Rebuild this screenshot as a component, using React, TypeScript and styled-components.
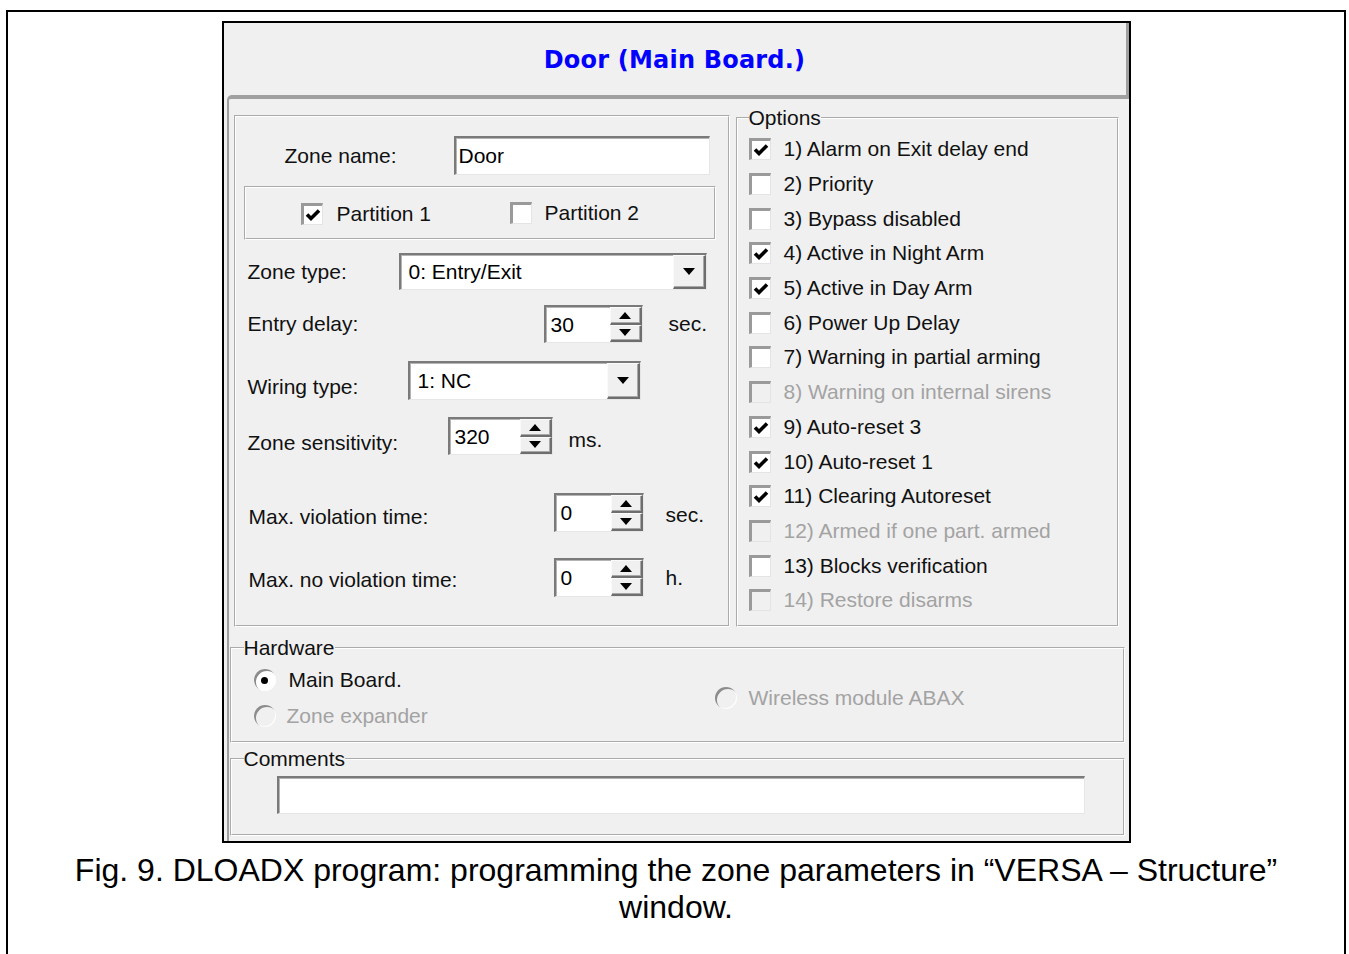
import React from 'react';
import styled, { createGlobalStyle } from 'styled-components';

const GlobalStyle = createGlobalStyle`
  html, body {
    margin: 0;
    padding: 0;
    background: #fff;
  }
  body {
    font-family: "Liberation Sans", Arial, sans-serif;
    color: #111;
    overflow: hidden;
  }
`;

// Figure frame
const Figure = styled.div`
  margin: 10px 3px 0 6px;
  height: 960px;
  box-sizing: border-box;
  border: 2px solid #000;
  border-bottom: none;
  padding-top: 9px;
  display: flex;
  flex-direction: column;
  align-items: center;
`;

const Caption = styled.p`
  margin: 9px 0 0;
  max-width: 1240px;
  font-size: 32px;
  line-height: 37px;
  color: #000;
  text-align: center;
`;

// Dialog window
const Dialog = styled.div`
  width: 909px;
  height: 822px;
  box-sizing: border-box;
  border: 2px solid #000;
  background: #f0f0f0;
  display: flex;
  flex-direction: column;
  font-size: 21px;
`;

const Header = styled.div`
  height: 72px;
  flex: none;
  border-right: 3px solid #a0a0a0;
  display: flex;
  align-items: center;
  justify-content: center;
  padding-top: 2px;
  box-sizing: border-box;
`;

const Title = styled.h1`
  margin: 0;
  font-family: "DejaVu Sans", Verdana, sans-serif;
  font-size: 24px;
  font-weight: bold;
  letter-spacing: 0.2px;
  color: #0000ff;
`;

const Body = styled.div`
  flex: 1;
  margin-left: 3px;
  border-top: 4px solid #a0a0a0;
  border-left: 2px solid #a0a0a0;
  border-top-left-radius: 5px;
  display: flex;
  flex-direction: column;
`;

const TopRow = styled.div`
  display: flex;
  gap: 6px;
  height: 520px;
  margin: 8px 10px 0 5px;
`;

const Panel = styled.div`
  width: 496px;
  margin-top: 8px;
  box-sizing: border-box;
  border: 2px groove #fff;
  display: flex;
  flex-direction: column;
`;

const Group = styled.fieldset<{ $w?: number; $h: number; $m: string }>`
  ${p => (p.$w ? `width: ${p.$w}px;` : '')}
  height: ${p => p.$h}px;
  margin: ${p => p.$m};
  padding: 0;
  box-sizing: border-box;
  border: 2px groove #fff;
  min-width: 0;
`;

const Legend = styled.legend<{ $x: number }>`
  margin-left: ${p => p.$x}px;
  padding: 0;
  font-size: 21px;
  line-height: 22px;
  color: #111;
`;

// Form rows
const FormRow = styled.div<{ $top: number; $h: number; $indent?: number }>`
  display: flex;
  align-items: center;
  flex: none;
  margin-top: ${p => p.$top}px;
  height: ${p => p.$h}px;
  padding-left: ${p => p.$indent ?? 12}px;
`;

const Label = styled.span<{ $w: number; $dy?: number }>`
  width: ${p => p.$w}px;
  flex: none;
  padding-top: ${p => (p.$dy ?? 0) * 2}px;
  white-space: nowrap;
`;

const Unit = styled.span<{ $gap: number; $dy?: number }>`
  margin-left: ${p => p.$gap}px;
  padding-top: ${p => (p.$dy ?? 0) * 2}px;
`;

const Sunken = styled.div<{ $w: number }>`
  width: ${p => p.$w}px;
  height: 100%;
  box-sizing: border-box;
  background: #fff;
  border-style: solid;
  border-width: 2px 1px 1px 2px;
  border-color: #7a7a7a #e6e6e6 #e6e6e6 #7a7a7a;
  box-shadow: inset 1px 1px 0 #b4b4b4;
  display: flex;
  align-items: stretch;
`;

const FieldText = styled.span<{ $pad: number }>`
  flex: 1;
  display: flex;
  align-items: center;
  padding-left: ${p => p.$pad}px;
  color: #000;
`;

const Raised = styled.div`
  box-sizing: border-box;
  background: #f0f0f0;
  border-style: solid;
  border-width: 1px 2px 2px 1px;
  border-color: #fafafa #6e6e6e #6e6e6e #fafafa;
  box-shadow: inset -1px -1px 0 #a8a8a8;
  display: flex;
  align-items: center;
  justify-content: center;
`;

const DropButton = styled(Raised)`
  width: 33px;
  flex: none;
`;

const SpinButtons = styled.div`
  width: 32px;
  flex: none;
  display: flex;
  flex-direction: column;
`;

const SpinHalf = styled(Raised)`
  flex: 1;
`;

const Arrow = styled.span<{ $up?: boolean }>`
  width: 0;
  height: 0;
  border-left: 6px solid transparent;
  border-right: 6px solid transparent;
  ${p => (p.$up ? 'border-bottom: 7px solid #000;' : 'border-top: 7px solid #000;')}
`;

// Check boxes and radios
const Box = styled.span<{ $disabled?: boolean }>`
  width: 22px;
  height: 22px;
  flex: none;
  box-sizing: border-box;
  border-style: solid;
  border-width: 3px 1px 1px 3px;
  border-color: #9a9a9a #e4e4e4 #e4e4e4 #9a9a9a;
  background: ${p => (p.$disabled ? '#f0f0f0' : '#fff')};
  display: flex;
  align-items: center;
  justify-content: center;
`;

const Radio = styled.span<{ $disabled?: boolean }>`
  width: 22px;
  height: 22px;
  flex: none;
  border-radius: 50%;
  background: ${p => (p.$disabled ? '#f0f0f0' : '#fff')};
  box-shadow: inset 2px 2px 0 #8c8c8c, inset -1px -1px 0 #fdfdfd;
  display: flex;
  align-items: center;
  justify-content: center;
`;

const Dot = styled.span`
  width: 7px;
  height: 7px;
  border-radius: 50%;
  background: #000;
`;

const Item = styled.div<{ $h: number; $gap: number; $disabled?: boolean }>`
  display: flex;
  align-items: center;
  height: ${p => p.$h}px;
  gap: ${p => p.$gap}px;
  color: ${p => (p.$disabled ? '#a3a3a3' : '#111')};
  white-space: nowrap;
`;

const PartitionBox = styled.div`
  flex: none;
  height: 54px;
  margin: 11px 12px 0 8px;
  box-sizing: border-box;
  border: 2px groove #fff;
  display: flex;
  align-items: center;
  padding-left: 55px;
`;

const PartitionSlot = styled.div<{ $w?: number; $dy?: number }>`
  ${p => (p.$w ? `width: ${p.$w}px;` : '')}
  padding-top: ${p => (p.$dy ?? 0) * 2}px;
`;

const OptionList = styled.div`
  padding: 3px 0 0 11px;
`;

const HardwareGrid = styled.div`
  display: grid;
  grid-template-columns: 461px 1fr;
  grid-template-rows: 36px 36px;
  padding: 3px 0 0 22px;
`;

const WirelessCell = styled.div`
  grid-column: 2;
  grid-row: 1 / span 2;
  display: flex;
  align-items: center;
`;

const CommentInput = styled(Sunken)`
  height: 38px;
  margin: 6px 0 0 45px;
`;

const Check = ({ checked, disabled }: { checked?: boolean; disabled?: boolean }) => (
  <Box $disabled={disabled}>
    {checked && (
      <svg width="16" height="14" viewBox="0 0 16 14">
        <polyline points="2,6.5 6,10.5 14,2.5" fill="none" stroke="#000" strokeWidth="3.6" />
      </svg>
    )}
  </Box>
);

const Combo = ({ w, value }: { w: number; value: string }) => (
  <Sunken $w={w}>
    <FieldText $pad={8}>{value}</FieldText>
    <DropButton>
      <Arrow />
    </DropButton>
  </Sunken>
);

const Spin = ({ w, value }: { w: number; value: string }) => (
  <Sunken $w={w}>
    <FieldText $pad={5}>{value}</FieldText>
    <SpinButtons>
      <SpinHalf>
        <Arrow $up />
      </SpinHalf>
      <SpinHalf>
        <Arrow />
      </SpinHalf>
    </SpinButtons>
  </Sunken>
);

const options: { text: string; checked?: boolean; disabled?: boolean }[] = [
  { text: '1) Alarm on Exit delay end', checked: true },
  { text: '2) Priority' },
  { text: '3) Bypass disabled' },
  { text: '4) Active in Night Arm', checked: true },
  { text: '5) Active in Day Arm', checked: true },
  { text: '6) Power Up Delay' },
  { text: '7) Warning in partial arming' },
  { text: '8) Warning on internal sirens', disabled: true },
  { text: '9) Auto-reset 3', checked: true },
  { text: '10) Auto-reset 1', checked: true },
  { text: '11) Clearing Autoreset', checked: true },
  { text: '12) Armed if one part. armed', disabled: true },
  { text: '13) Blocks verification' },
  { text: '14) Restore disarms', disabled: true },
];

const App = () => {
  return (
    <>
      <GlobalStyle />
      <Figure>
        <Dialog>
          <Header>
            <Title>Door (Main Board.)</Title>
          </Header>
          <Body>
            <TopRow>
              <Panel>
                <FormRow $top={19} $h={39} $indent={49}>
                  <Label $w={169}>Zone name:</Label>
                  <Sunken $w={256}>
                    <FieldText $pad={3}>Door</FieldText>
                  </Sunken>
                </FormRow>

                <PartitionBox>
                  <PartitionSlot $w={209} $dy={1}>
                    <Item $h={30} $gap={14}>
                      <Check checked />
                      Partition 1
                    </Item>
                  </PartitionSlot>
                  <PartitionSlot>
                    <Item $h={30} $gap={13}>
                      <Check />
                      Partition 2
                    </Item>
                  </PartitionSlot>
                </PartitionBox>

                <FormRow $top={13} $h={37}>
                  <Label $w={151}>Zone type:</Label>
                  <Combo w={308} value="0: Entry/Exit" />
                </FormRow>

                <FormRow $top={15} $h={38}>
                  <Label $w={296}>Entry delay:</Label>
                  <Spin w={99} value="30" />
                  <Unit $gap={26}>sec.</Unit>
                </FormRow>

                <FormRow $top={18} $h={39}>
                  <Label $w={160} $dy={6}>Wiring type:</Label>
                  <Combo w={233} value="1: NC" />
                </FormRow>

                <FormRow $top={17} $h={38}>
                  <Label $w={200} $dy={7}>Zone sensitivity:</Label>
                  <Spin w={105} value="320" />
                  <Unit $gap={16} $dy={4}>ms.</Unit>
                </FormRow>

                <FormRow $top={38} $h={39} $indent={13}>
                  <Label $w={305} $dy={4}>Max. violation time:</Label>
                  <Spin w={90} value="0" />
                  <Unit $gap={22} $dy={2}>sec.</Unit>
                </FormRow>

                <FormRow $top={26} $h={39} $indent={13}>
                  <Label $w={305} $dy={2}>Max. no violation time:</Label>
                  <Spin w={90} value="0" />
                  <Unit $gap={22}>h.</Unit>
                </FormRow>
              </Panel>

              <Group $w={383} $h={520} $m="0">
                <Legend $x={11}>Options</Legend>
                <OptionList>
                  {options.map(o => (
                    <Item key={o.text} $h={34.7} $gap={13} $disabled={o.disabled}>
                      <Check checked={o.checked} disabled={o.disabled} />
                      {o.text}
                    </Item>
                  ))}
                </OptionList>
              </Group>
            </TopRow>

            <Group $h={106} $m="10px 4px 0 1px">
              <Legend $x={12}>Hardware</Legend>
              <HardwareGrid>
                <Item $h={36} $gap={13}>
                  <Radio>
                    <Dot />
                  </Radio>
                  Main Board.
                </Item>
                <WirelessCell>
                  <Item $h={36} $gap={12} $disabled>
                    <Radio $disabled />
                    Wireless module ABAX
                  </Item>
                </WirelessCell>
                <Item $h={36} $gap={11} $disabled>
                  <Radio $disabled />
                  Zone expander
                </Item>
              </HardwareGrid>
            </Group>

            <Group $h={88} $m="5px 4px 0 1px">
              <Legend $x={12}>Comments</Legend>
              <CommentInput $w={808} />
            </Group>
          </Body>
        </Dialog>
        <Caption>
          Fig. 9. DLOADX program: programming the zone parameters in “VERSA – Structure” window.
        </Caption>
      </Figure>
    </>
  );
};

export default App;
